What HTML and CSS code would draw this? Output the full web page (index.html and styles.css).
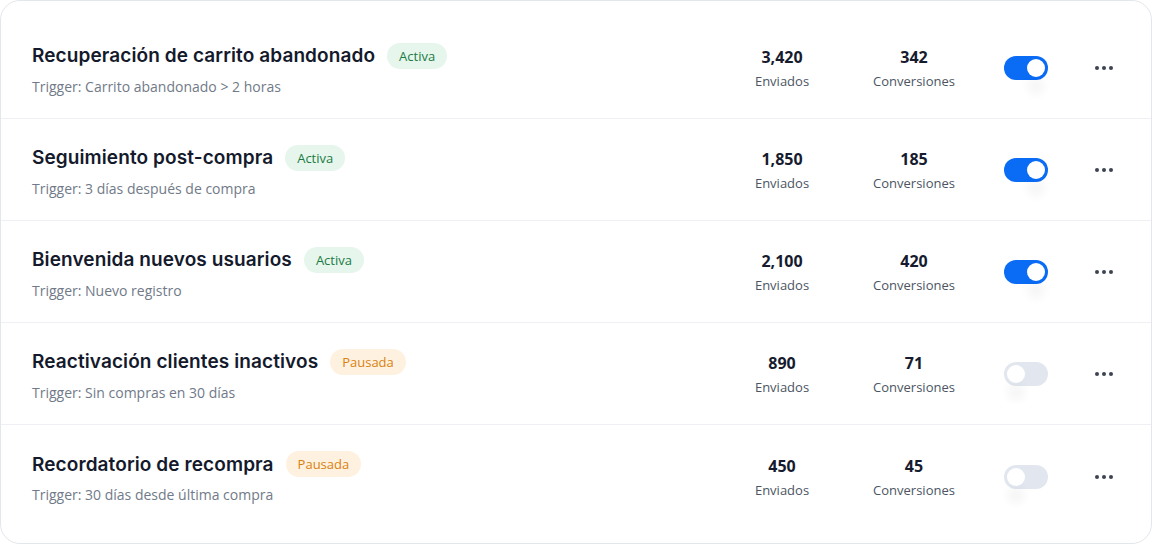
FILE: index.html
```html
<!DOCTYPE html>
<html lang="es">

<head>
    <meta charset="UTF-8" />
    <meta name="viewport" content="width=device-width, initial-scale=1.0" />
    <title>Automatizaciones</title>
    <link rel="stylesheet" href="styles.css">
</head>

<body>
    <div class="card">
        <div class="row">
            <div class="info">
                <div class="title-line">
                    <h3>Recuperación de carrito abandonado</h3>
                    <span class="badge activa">Activa</span>
                </div>
                <p class="trigger">Trigger: Carrito abandonado &gt; 2 horas</p>
            </div>
            <div class="stats">
                <div class="stat"><strong>3,420</strong><span>Enviados</span></div>
                <div class="stat"><strong>342</strong><span>Conversiones</span></div>
            </div>
            <div class="toggle on"><span class="knob"></span></div>
            <button class="more"><svg width="18" height="4" viewBox="0 0 18 4"><circle cx="2" cy="2" r="2"/><circle cx="9" cy="2" r="2"/><circle cx="16" cy="2" r="2"/></svg></button>
        </div>

        <div class="row">
            <div class="info">
                <div class="title-line">
                    <h3>Seguimiento post-compra</h3>
                    <span class="badge activa">Activa</span>
                </div>
                <p class="trigger">Trigger: 3 días después de compra</p>
            </div>
            <div class="stats">
                <div class="stat"><strong>1,850</strong><span>Enviados</span></div>
                <div class="stat"><strong>185</strong><span>Conversiones</span></div>
            </div>
            <div class="toggle on"><span class="knob"></span></div>
            <button class="more"><svg width="18" height="4" viewBox="0 0 18 4"><circle cx="2" cy="2" r="2"/><circle cx="9" cy="2" r="2"/><circle cx="16" cy="2" r="2"/></svg></button>
        </div>

        <div class="row">
            <div class="info">
                <div class="title-line">
                    <h3>Bienvenida nuevos usuarios</h3>
                    <span class="badge activa">Activa</span>
                </div>
                <p class="trigger">Trigger: Nuevo registro</p>
            </div>
            <div class="stats">
                <div class="stat"><strong>2,100</strong><span>Enviados</span></div>
                <div class="stat"><strong>420</strong><span>Conversiones</span></div>
            </div>
            <div class="toggle on"><span class="knob"></span></div>
            <button class="more"><svg width="18" height="4" viewBox="0 0 18 4"><circle cx="2" cy="2" r="2"/><circle cx="9" cy="2" r="2"/><circle cx="16" cy="2" r="2"/></svg></button>
        </div>

        <div class="row">
            <div class="info">
                <div class="title-line">
                    <h3>Reactivación clientes inactivos</h3>
                    <span class="badge pausada">Pausada</span>
                </div>
                <p class="trigger">Trigger: Sin compras en 30 días</p>
            </div>
            <div class="stats">
                <div class="stat"><strong>890</strong><span>Enviados</span></div>
                <div class="stat"><strong>71</strong><span>Conversiones</span></div>
            </div>
            <div class="toggle"><span class="knob"></span></div>
            <button class="more"><svg width="18" height="4" viewBox="0 0 18 4"><circle cx="2" cy="2" r="2"/><circle cx="9" cy="2" r="2"/><circle cx="16" cy="2" r="2"/></svg></button>
        </div>

        <div class="row">
            <div class="info">
                <div class="title-line">
                    <h3>Recordatorio de recompra</h3>
                    <span class="badge pausada">Pausada</span>
                </div>
                <p class="trigger">Trigger: 30 días desde última compra</p>
            </div>
            <div class="stats">
                <div class="stat"><strong>450</strong><span>Enviados</span></div>
                <div class="stat"><strong>45</strong><span>Conversiones</span></div>
            </div>
            <div class="toggle"><span class="knob"></span></div>
            <button class="more"><svg width="18" height="4" viewBox="0 0 18 4"><circle cx="2" cy="2" r="2"/><circle cx="9" cy="2" r="2"/><circle cx="16" cy="2" r="2"/></svg></button>
        </div>
    </div>
</body>

</html>
```

FILE: styles.css
```css
body {
    margin: 0;
    background-color: #fff;
    font-family: "Open Sans", Arial, sans-serif;
    color: #111827;
}

.card {
    width: 1152px;
    height: 544px;
    box-sizing: border-box;
    border: 1px solid #e3e7ec;
    border-radius: 20px;
    padding: 16px 0;
    background-color: #fff;
}

.row {
    display: flex;
    align-items: center;
    height: 102px;
    box-sizing: border-box;
    padding: 1px 31px 0 31px;
    border-bottom: 1px solid #eef0f3;
}

.row:last-child {
    border-bottom: none;
}

.info {
    flex: 1;
    padding-top: 2px;
}

.title-line {
    display: flex;
    align-items: center;
    gap: 12px;
}

.title-line h3 {
    margin: 0;
    font-family: "Inter", sans-serif;
    font-size: 19px;
    font-weight: 600;
    color: #141a2c;
    letter-spacing: 0.1px;
}

.badge {
    display: inline-block;
    padding: 4px 12px;
    border-radius: 13px;
    font-size: 13px;
    font-weight: 500;
    line-height: 18px;
}

.badge.activa {
    background-color: #e6f6ec;
    color: #1c7a44;
}

.badge.pausada {
    background-color: #fff1df;
    color: #d9810f;
}

.trigger {
    margin: 8px 0 0;
    font-size: 14px;
    color: #717a88;
}

.stats {
    display: flex;
    gap: 32px;
    margin-right: 40px;
}

.stat {
    width: 100px;
    display: flex;
    flex-direction: column;
    align-items: center;
    gap: 4px;
}

.stat strong {
    font-size: 16px;
    font-weight: 700;
    color: #161b2e;
}

.stat span {
    font-size: 13px;
    color: #4b5563;
}

.toggle {
    position: relative;
    width: 44px;
    height: 24px;
    border-radius: 12px;
    background-color: #e2e7ef;
    margin-right: 40px;
}

.toggle.on {
    background-color: #0a6cf5;
}

.knob {
    position: absolute;
    top: 3px;
    left: 3px;
    width: 18px;
    height: 18px;
    border-radius: 50%;
    background-color: #fff;
    box-shadow: 0 18px 10px rgba(0, 0, 0, 0.04);
}

.toggle.on .knob {
    left: 23px;
}

.more {
    display: flex;
    align-items: center;
    justify-content: center;
    width: 32px;
    height: 32px;
    border: none;
    background: none;
    padding: 0;
    fill: #3d4354;
    cursor: pointer;
}
```
